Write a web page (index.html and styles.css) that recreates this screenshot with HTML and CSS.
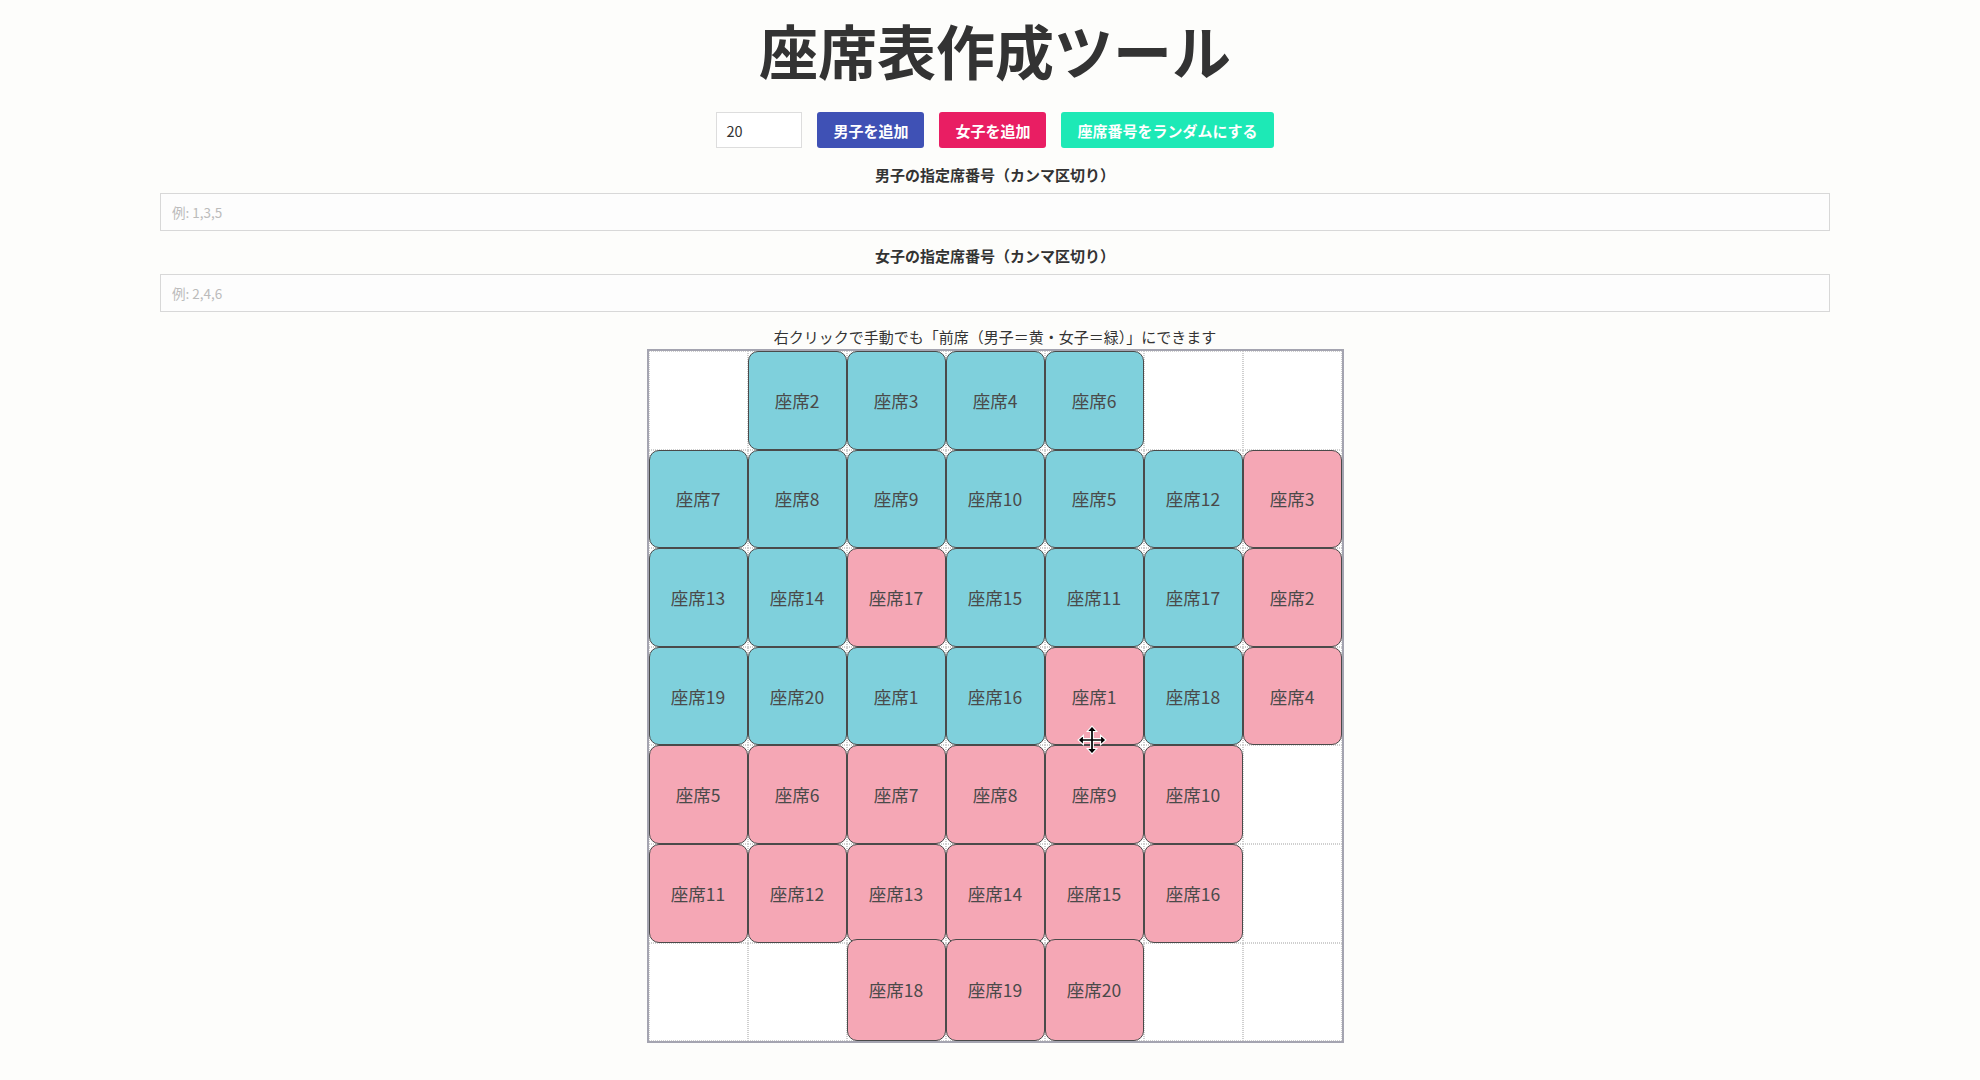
FILE: index.html
```html
<!DOCTYPE html>
<html lang="ja">
<head>
<meta charset="utf-8">
<title>座席表作成ツール</title>
<link rel="stylesheet" href="styles.css">
</head>
<body>
<main class="page">
  <h1 class="title">座席表作成ツール</h1>
  <div class="controls">
    <input class="count" type="number" value="20">
    <button class="btn btn-boy">男子を追加</button>
    <button class="btn btn-girl">女子を追加</button>
    <button class="btn btn-random">座席番号をランダムにする</button>
  </div>
  <label class="field-label">男子の指定席番号（カンマ区切り）</label>
  <input class="field" type="text" placeholder="例: 1,3,5">
  <label class="field-label field-label-2">女子の指定席番号（カンマ区切り）</label>
  <input class="field" type="text" placeholder="例: 2,4,6">
  <p class="note">右クリックで手動でも「前席（男子＝黄・女子＝緑）」にできます</p>
  <div class="board">
    <div class="cell"></div>
    <div class="cell"><div class="seat boy">座席2</div></div>
    <div class="cell"><div class="seat boy">座席3</div></div>
    <div class="cell"><div class="seat boy">座席4</div></div>
    <div class="cell"><div class="seat boy">座席6</div></div>
    <div class="cell"></div>
    <div class="cell"></div>

    <div class="cell"><div class="seat boy">座席7</div></div>
    <div class="cell"><div class="seat boy">座席8</div></div>
    <div class="cell"><div class="seat boy">座席9</div></div>
    <div class="cell"><div class="seat boy">座席10</div></div>
    <div class="cell"><div class="seat boy">座席5</div></div>
    <div class="cell"><div class="seat boy">座席12</div></div>
    <div class="cell"><div class="seat girl">座席3</div></div>

    <div class="cell"><div class="seat boy">座席13</div></div>
    <div class="cell"><div class="seat boy">座席14</div></div>
    <div class="cell"><div class="seat girl">座席17</div></div>
    <div class="cell"><div class="seat boy">座席15</div></div>
    <div class="cell"><div class="seat boy">座席11</div></div>
    <div class="cell"><div class="seat boy">座席17</div></div>
    <div class="cell"><div class="seat girl">座席2</div></div>

    <div class="cell"><div class="seat boy">座席19</div></div>
    <div class="cell"><div class="seat boy">座席20</div></div>
    <div class="cell"><div class="seat boy">座席1</div></div>
    <div class="cell"><div class="seat boy">座席16</div></div>
    <div class="cell"><div class="seat girl">座席1</div></div>
    <div class="cell"><div class="seat boy">座席18</div></div>
    <div class="cell"><div class="seat girl">座席4</div></div>

    <div class="cell"><div class="seat girl">座席5</div></div>
    <div class="cell"><div class="seat girl">座席6</div></div>
    <div class="cell"><div class="seat girl">座席7</div></div>
    <div class="cell"><div class="seat girl">座席8</div></div>
    <div class="cell"><div class="seat girl">座席9</div></div>
    <div class="cell"><div class="seat girl">座席10</div></div>
    <div class="cell"></div>

    <div class="cell"><div class="seat girl">座席11</div></div>
    <div class="cell"><div class="seat girl">座席12</div></div>
    <div class="cell"><div class="seat girl">座席13</div></div>
    <div class="cell"><div class="seat girl">座席14</div></div>
    <div class="cell"><div class="seat girl">座席15</div></div>
    <div class="cell"><div class="seat girl">座席16</div></div>
    <div class="cell"></div>

    <div class="cell"></div>
    <div class="cell"></div>
    <div class="cell"><div class="seat girl lifted">座席18</div></div>
    <div class="cell"><div class="seat girl lifted">座席19</div></div>
    <div class="cell"><div class="seat girl lifted">座席20</div></div>
    <div class="cell"></div>
    <div class="cell"></div>

    <svg class="cursor" width="30" height="30" viewBox="0 0 28 28" aria-hidden="true">
      <path d="M14 1 L18.5 6 L15.3 6 L15.3 12.7 L22 12.7 L22 9.5 L27 14 L22 18.5 L22 15.3 L15.3 15.3 L15.3 22 L18.5 22 L14 27 L9.5 22 L12.7 22 L12.7 15.3 L6 15.3 L6 18.5 L1 14 L6 9.5 L6 12.7 L12.7 12.7 L12.7 6 L9.5 6 Z" fill="#000" stroke="#fff" stroke-width="1"/>
    </svg>
  </div>
</main>
</body>
</html>
```

FILE: styles.css
```css
* { box-sizing: border-box; }

html, body {
  margin: 0;
  padding: 0;
  background: #fdfdfb;
}

body {
  font-family: "Noto Sans CJK JP", "Noto Sans", sans-serif;
  color: #333;
  padding-left: 10px;
}

.page {
  display: flex;
  flex-direction: column;
  align-items: center;
  padding: 14px 0 20px;
}

.title {
  margin: 0;
  font-size: 59px;
  line-height: 72px;
  font-weight: 700;
  color: #333;
}

.controls {
  margin-top: 26px;
  display: flex;
  align-items: center;
  gap: 15px;
}

.count {
  width: 86px;
  height: 36px;
  border: 1px solid #ddd;
  background: #fff;
  padding: 0 9px;
  font-family: "Noto Sans CJK JP", sans-serif;
  font-size: 14.5px;
  color: #333;
}

.count::-webkit-inner-spin-button,
.count::-webkit-outer-spin-button { -webkit-appearance: none; margin: 0; }

.btn {
  height: 36px;
  border: none;
  border-radius: 3px;
  padding: 0 16px;
  color: #fff;
  font-family: "Noto Sans CJK JP", sans-serif;
  font-size: 15px;
  font-weight: 700;
}

.btn-boy { background: #3f51b5; }
.btn-girl { background: #e91e63; }
.btn-random { background: #1de9b6; }

.field-label {
  margin-top: 17px;
  font-size: 15px;
  line-height: 20px;
  font-weight: 700;
  color: #333;
}

.field-label-2 { margin-top: 15px; }

.field {
  margin-top: 8px;
  width: calc(100% - 300px);
  height: 38px;
  border: 1px solid #d8d8d8;
  background: #fdfdfd;
  padding: 0 11px;
  font-family: "Noto Sans CJK JP", sans-serif;
  font-size: 13.5px;
  color: #333;
}

.field::placeholder { color: #bbb; }

.note {
  margin: 15px 0 0;
  font-size: 15px;
  line-height: 20px;
  color: #333;
}

.board {
  position: relative;
  margin-top: 2px;
  width: 697px;
  border: 2px solid #a4a4b0;
  background: #fff;
  display: grid;
  grid-template-columns: repeat(7, 1fr);
  grid-auto-rows: 98.6px;
}

.cell {
  border: 1px dotted #cfcfcf;
  position: relative;
}

.seat {
  position: absolute;
  inset: -1px;
  display: flex;
  align-items: center;
  justify-content: center;
  border: 1.5px solid #4a4a4a;
  border-radius: 10px;
  font-size: 17.5px;
  color: #4a4a4a;
}

.seat.boy { background: #7fd0dc; }
.seat.girl { background: #f5a7b5; }

.seat.lifted { top: -5px; }

.cursor {
  position: absolute;
  left: 428px;
  top: 374px;
}
```
